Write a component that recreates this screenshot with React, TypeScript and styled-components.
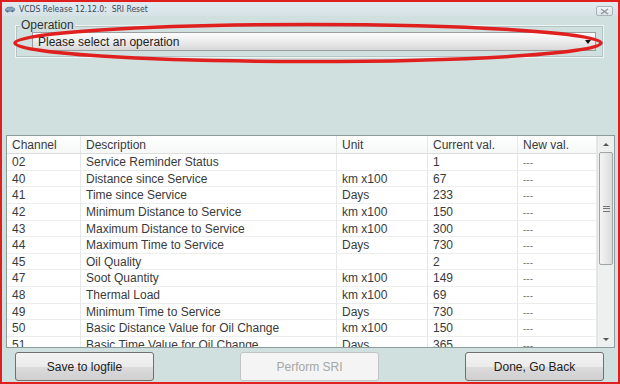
import React from 'react';
import styled, {createGlobalStyle} from 'styled-components';

const GlobalStyle = createGlobalStyle`
  html, body {
    margin: 0;
    padding: 0;
    background: #ffffff;
  }
  * {
    box-sizing: border-box;
  }
`

type Row = {
    ch: string
    desc: string
    unit: string
    cur: string
}

const rows: Row[] = [
    {ch: '02', desc: 'Service Reminder Status', unit: '', cur: '1'},
    {ch: '40', desc: 'Distance since Service', unit: 'km x100', cur: '67'},
    {ch: '41', desc: 'Time since Service', unit: 'Days', cur: '233'},
    {ch: '42', desc: 'Minimum Distance to Service', unit: 'km x100', cur: '150'},
    {ch: '43', desc: 'Maximum Distance to Service', unit: 'km x100', cur: '300'},
    {ch: '44', desc: 'Maximum Time to Service', unit: 'Days', cur: '730'},
    {ch: '45', desc: 'Oil Quality', unit: '', cur: '2'},
    {ch: '47', desc: 'Soot Quantity', unit: 'km x100', cur: '149'},
    {ch: '48', desc: 'Thermal Load', unit: 'km x100', cur: '69'},
    {ch: '49', desc: 'Minimum Time to Service', unit: 'Days', cur: '730'},
    {ch: '50', desc: 'Basic Distance Value for Oil Change', unit: 'km x100', cur: '150'},
    {ch: '51', desc: 'Basic Time Value for Oil Change', unit: 'Days', cur: '365'},
]

const headers = ['Channel', 'Description', 'Unit', 'Current val.', 'New val.']

export default function App() {
    return (
        <>
            <GlobalStyle/>
            <Window>
                <TitleBar>
                    <AppIcon viewBox="0 0 12 8">
                        <path d="M1 5 L3 2.5 L8 2 L11 4 L10 6 L2 6.5 Z" fill="#8aa4bc" stroke="#4d6a86" strokeWidth="0.6"/>
                        <circle cx="3.5" cy="6.5" r="1" fill="#4d6a86"/>
                        <circle cx="8.5" cy="6.3" r="1" fill="#4d6a86"/>
                    </AppIcon>
                    <TitleText>VCDS Release 12.12.0:&nbsp; SRI Reset</TitleText>
                    <CloseBtn>
                        <svg width="9" height="7" viewBox="0 0 9 7">
                            <path d="M1 1 L8 6 M8 1 L1 6" stroke="#8a949c" strokeWidth="1.3"/>
                        </svg>
                    </CloseBtn>
                </TitleBar>
                <Body>
                    <GroupBox>
                        <GroupLabel>Operation</GroupLabel>
                        <Combo>
                            <span>Please select an operation</span>
                            <ComboArrow/>
                        </Combo>
                        <Annotation viewBox="0 0 600 44">
                            <ellipse cx="296" cy="21" rx="293" ry="18.5" fill="none" stroke="#e0201f" strokeWidth="3.5"/>
                        </Annotation>
                    </GroupBox>
                    <Table>
                        <Grid>
                            {headers.map((h) => (
                                <Cell key={h} head>{h}</Cell>
                            ))}
                            {rows.map((r) => (
                                <React.Fragment key={r.ch}>
                                    <Cell>{r.ch}</Cell>
                                    <Cell>{r.desc}</Cell>
                                    <Cell>{r.unit}</Cell>
                                    <Cell>{r.cur}</Cell>
                                    <Cell dim>---</Cell>
                                </React.Fragment>
                            ))}
                        </Grid>
                        <ScrollBar>
                            <Arrow up/>
                            <Track>
                                <Thumb>
                                    <Grip/>
                                </Thumb>
                            </Track>
                            <Arrow/>
                        </ScrollBar>
                    </Table>
                    <ButtonRow>
                        <Button>Save to logfile</Button>
                        <Button disabled>Perform SRI</Button>
                        <Button>Done, Go Back</Button>
                    </ButtonRow>
                </Body>
            </Window>
        </>
    );
}

const Window = styled.div`
  width: 620px;
  height: 384px;
  border: 2px solid #e0201f;
  background: #cfe0df;
  display: flex;
  flex-direction: column;
  font-family: "Liberation Sans", Arial, sans-serif;
  font-size: 12px;
  color: #3a3a3a;
  overflow: hidden;
`

const TitleBar = styled.div`
  height: 14px;
  display: flex;
  align-items: center;
  padding: 0 5px 0 2px;
  background: linear-gradient(#e2eaf0, #d6e2e6);
`

const AppIcon = styled.svg`
  width: 12px;
  height: 8px;
  margin-right: 3px;
`

const TitleText = styled.div`
  font-family: "DejaVu Sans Condensed", "Liberation Sans", sans-serif;
  font-size: 8.5px;
  color: #34495c;
  flex: 1;
`

const CloseBtn = styled.div`
  width: 17px;
  height: 10px;
  margin-top: 4px;
  border: 1px solid #a9b4ba;
  border-radius: 2px;
  background: linear-gradient(#f0f4f6, #dde5e8);
  display: flex;
  align-items: center;
  justify-content: center;
`

const Body = styled.div`
  flex: 1;
  display: flex;
  flex-direction: column;
  padding: 0 3px 0 4px;
`

const GroupBox = styled.div`
  position: relative;
  margin: 9px 11px 0 9px;
  height: 33px;
  border: 1px solid #eef3f3;
  outline: 1px solid #b4c4c4;
  outline-offset: -2px;
  padding: 6px 7px 0 16px;
`

const GroupLabel = styled.div`
  position: absolute;
  top: -8px;
  left: 4px;
  padding: 0 1px;
  background: #cfe0df;
  font-size: 12px;
  line-height: 14px;
  color: #333;
`

const Combo = styled.div`
  height: 19px;
  border: 1px solid #9a9e9e;
  background: linear-gradient(#fcfcfc 0%, #ececec 50%, #d8d8d8 100%);
  display: flex;
  align-items: center;
  justify-content: space-between;
  padding: 0 4px 0 5px;
  color: #222;
  font-size: 12px;
`

const ComboArrow = styled.div`
  width: 0;
  height: 0;
  border-left: 3px solid transparent;
  border-right: 3px solid transparent;
  border-top: 4px solid #111;
`

const Annotation = styled.svg`
  position: absolute;
  left: -4px;
  top: -4px;
  width: 600px;
  height: 44px;
  overflow: visible;
`

const Table = styled.div`
  margin-top: 77px;
  height: 213px;
  display: flex;
  border: 1px solid #8c9c9c;
  background: #ffffff;
  overflow: hidden;
`

const Grid = styled.div`
  display: grid;
  grid-template-columns: 74px 256px 91px 90px 79px;
  grid-auto-rows: 16.65px;
  grid-template-rows: 18px;
  align-content: start;
`

const Cell = styled.div<{head?: boolean, dim?: boolean}>`
  padding-left: 5px;
  border-right: 1px solid #e6e8e8;
  border-bottom: 1px solid ${p => p.head ? '#dcdede' : '#eceeee'};
  line-height: ${p => p.head ? '19px' : '17px'};
  white-space: nowrap;
  overflow: hidden;
  color: ${p => p.dim ? '#7a7a7a' : '#3a3a3a'};
  font-size: ${p => p.dim ? '10px' : '12px'};
  background: ${p => p.head ? 'linear-gradient(#ffffff, #f6f7f7)' : '#ffffff'};
`

const ScrollBar = styled.div`
  width: 17px;
  display: flex;
  flex-direction: column;
  background: #eef0f0;
  border-left: 1px solid #e2e4e4;
`

const Arrow = styled.div<{up?: boolean}>`
  height: 16px;
  display: flex;
  align-items: center;
  justify-content: center;
  &::after {
    content: '';
    border-left: 3px solid transparent;
    border-right: 3px solid transparent;
    ${p => p.up ? 'border-bottom: 3px solid #555;' : 'border-top: 3px solid #555;'}
  }
`

const Track = styled.div`
  flex: 1;
  padding: 0 1px;
`

const Thumb = styled.div`
  height: 113px;
  border: 1px solid #9fa4a8;
  border-radius: 2px;
  background: linear-gradient(90deg, #f4f4f4, #dcdcdc);
  display: flex;
  align-items: center;
  justify-content: center;
`

const Grip = styled.div`
  width: 7px;
  height: 6px;
  border-top: 1px solid #777;
  border-bottom: 1px solid #777;
  position: relative;
  &::after {
    content: '';
    position: absolute;
    left: 0;
    right: 0;
    top: 1.5px;
    border-top: 1px solid #777;
  }
`

const ButtonRow = styled.div`
  display: flex;
  justify-content: space-between;
  padding: 0 11px 0 9px;
  margin-top: 4px;
`

const Button = styled.button`
  width: 139px;
  height: 29px;
  font-family: "Liberation Sans", Arial, sans-serif;
  font-size: 12px;
  color: #222;
  border: 1px solid #707070;
  border-radius: 3px;
  background: linear-gradient(#f3f3f3 0%, #ebebeb 50%, #dcdcdc 51%, #cfcfcf 100%);
  padding: 0;

  &:disabled {
    color: #a6a6a6;
    border-color: #c0c4c4;
    background: #f4f4f4;
  }
`
